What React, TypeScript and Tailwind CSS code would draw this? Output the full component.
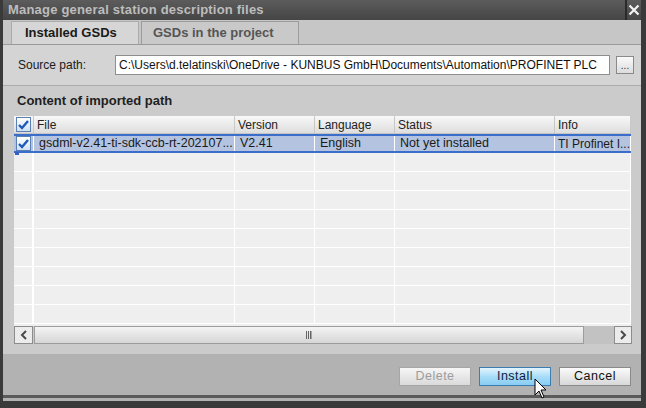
import React from "react";

const font = { fontFamily: '"Liberation Sans", Arial, sans-serif' };

const cols = [
  { label: "File", w: "w-[201px]" },
  { label: "Version", w: "w-[80px]" },
  { label: "Language", w: "w-[80px]" },
  { label: "Status", w: "w-[160px]" },
  { label: "Info", w: "flex-1" },
];

const rowData = ["gsdml-v2.41-ti-sdk-ccb-rt-202107...", "V2.41", "English", "Not yet installed", "TI Profinet I..."];

const Check = () => (
  <div className="w-[15px] h-[15px] border border-[#5b7fb0] bg-gradient-to-b from-[#ffffff] to-[#cfe0f4] flex items-center justify-center">
    <svg width="11" height="10" viewBox="0 0 11 10">
      <path d="M1 5 L4 8 L10 1" stroke="#1c5bb8" strokeWidth="2.4" fill="none" />
    </svg>
  </div>
);

const Btn = ({ label, kind }: { label: string; kind: "off" | "hot" | "on" }) => {
  const cls =
    kind === "hot"
      ? "border-[#3d7cb0] bg-gradient-to-b from-[#e4f5fe] via-[#a9dcf8] to-[#86cdf3] text-[#10203a]"
      : kind === "off"
      ? "border-[#a6a6a6] bg-gradient-to-b from-[#f6f6f6] to-[#dadada] text-[#9c9c9c]"
      : "border-[#8a8a8a] bg-gradient-to-b from-[#fbfbfb] to-[#d8d8d8] text-[#111]";
  return (
    <div
      className={`w-[72px] h-[19px] border flex items-center justify-center text-[12.5px] tracking-[0.5px] ${cls}`}
    >
      {label}
    </div>
  );
};

export default function App() {
  return (
    <div style={font} className="relative w-[646px] h-[408px] bg-[#3a3a3a] flex flex-col overflow-hidden">
      {/* title bar */}
      <div className="h-[20px] flex bg-gradient-to-b from-[#5c5c5c] to-[#454545] ml-[3px] mr-[5px]">
        <div className="flex-1 pl-[5px] text-[13px] font-bold text-[#bdbdbd] leading-[20px] tracking-[0.2px]">
          Manage general station description files
        </div>
        <div className="w-[2px] bg-[#2a2a2a]" />
        <div className="w-[14px] flex items-center justify-center">
          <svg width="12" height="12" viewBox="0 0 12 12">
            <path d="M1.5 1.5 L10.5 10.5 M10.5 1.5 L1.5 10.5" stroke="#f2f2f2" strokeWidth="2.2" />
          </svg>
        </div>
      </div>

      <div className="flex-1 flex flex-col ml-[3px] mr-[5px] bg-[#b2b2b2]">
        {/* tabs */}
        <div className="h-[25px] bg-[#c6c6c6] flex items-end pl-[8px] border-b border-[#9a9a9a]">
          <div className="w-[128px] h-[23px] bg-[#d6d6d6] border-t border-x border-[#ababab] border-b-0 flex items-center pl-[13px] text-[13px] font-bold text-[#1a1a1a]">
            Installed GSDs
          </div>
          <div className="ml-[2px] w-[158px] h-[23px] bg-[#c9c9c9] border border-[#9c9c9c] border-b-0 flex items-center pl-[11px] text-[13px] font-bold text-[#555]">
            GSDs in the project
          </div>
        </div>

        {/* source path */}
        <div className="h-[41px] bg-[#d4d4d4] flex items-center border-b border-[#ababab]">
          <div className="w-[112px] pl-[15px] text-[12px] text-[#1a1a1a]">Source path:</div>
          <div className="w-[495px] h-[20px] bg-white border border-[#8e8e8e] text-[12px] text-[#111] leading-[18px] pl-[3px] overflow-hidden whitespace-nowrap">
            C:\Users\d.telatinski\OneDrive - KUNBUS GmbH\Documents\Automation\PROFINET PLC
          </div>
          <div className="ml-[6px] w-[18px] h-[18px] border border-[#8a8a8a] bg-gradient-to-b from-[#fafafa] to-[#dcdcdc] flex items-end justify-center pb-[3px] text-[10px] leading-[8px] text-[#333]">
            ...
          </div>
        </div>

        {/* content */}
        <div className="h-[268px] bg-[#cbcbcb] flex flex-col pl-[11px] pr-[9px]">
          <div className="h-[30px] flex items-center pl-[3px] text-[13px] font-bold text-[#1e1e1e]">
            Content of imported path
          </div>
          <div className="w-[617px] h-[210px] bg-[#efefef] flex flex-col overflow-hidden">
            {/* header */}
            <div className="h-[18px] flex bg-gradient-to-b from-[#f8f8f8] to-[#dedede] border-b border-[#c4c4c4] text-[12px] text-[#222]">
              <div className="w-[20px] flex items-center justify-center border-r border-[#c8c8c8]">
                <Check />
              </div>
              {cols.map((c) => (
                <div key={c.label} className={`${c.w} flex items-center pl-[3px] border-r border-[#c8c8c8]`}>
                  {c.label}
                </div>
              ))}
            </div>
            {/* selected row */}
            <div className="relative h-[19px] flex bg-[#b4c4e0] border-y-2 border-[#3b6ecb] text-[12.5px] text-[#1a1a1a]">
              <div className="w-[20px] flex items-center justify-center border-r border-white">
                <Check />
              </div>
              {cols.map((c, i) => (
                <div
                  key={c.label}
                  className={`${c.w} flex items-center ${i === 4 ? "pl-[3px] text-[12px]" : "pl-[5px]"} border-r border-white whitespace-nowrap overflow-hidden`}
                >
                  {rowData[i]}
                </div>
              ))}
              <div className="absolute left-[1px] bottom-[-4px] w-[4px] h-[3px] bg-[#2f62c4]" />
            </div>
            {Array.from({ length: 9 }).map((_, r) => (
              <div key={r} className="h-[19px] flex border-b border-white">
                <div className="w-[20px] border-r-2 border-white" />
                {cols.map((c) => (
                  <div key={c.label} className={`${c.w} border-r border-white`} />
                ))}
              </div>
            ))}
          </div>
          {/* h scrollbar */}
          <div className="w-[618px] h-[18px] flex">
            <div className="w-[19px] h-[18px] border border-[#8c8c8c] bg-[#ececec] flex items-center justify-center">
              <svg width="8" height="10" viewBox="0 0 8 10">
                <path d="M6 1 L2 5 L6 9" stroke="#4a4a4a" strokeWidth="2" fill="none" />
              </svg>
            </div>
            <div className="ml-[1px] w-[550px] h-[18px] border border-[#9c9c9c] bg-gradient-to-b from-[#f4f4f4] to-[#d6d6d6] flex items-center justify-center">
              <svg width="6" height="8" viewBox="0 0 6 8">
                <path d="M0.5 0 V8 M2.5 0 V8 M4.5 0 V8 M6 0 V8" stroke="#555" strokeWidth="0.9" />
              </svg>
            </div>
            <div className="flex-1 bg-[#c2c2c2]" />
            <div className="w-[18px] h-[18px] border border-[#8c8c8c] bg-[#ececec] flex items-center justify-center">
              <svg width="8" height="10" viewBox="0 0 8 10">
                <path d="M2 1 L6 5 L2 9" stroke="#4a4a4a" strokeWidth="2" fill="none" />
              </svg>
            </div>
          </div>
        </div>

        {/* footer */}
        <div className="h-[44px] bg-[#b2b2b2] flex items-start pt-[13px] justify-end gap-[8px] pr-[10px] border-b-[3px] border-[#5a5a5a]">
          <Btn label="Delete" kind="off" />
          <Btn label="Install" kind="hot" />
          <Btn label="Cancel" kind="on" />
        </div>
      </div>
      <div className="h-[7px] bg-[#3a3a3a]" />

      {/* mouse pointer */}
      <svg className="absolute left-[534px] top-[378px]" width="14" height="22" viewBox="0 0 14 22">
        <path d="M1 1 L1 17 L5 13 L8 20 L10 19 L7 12 L12 12 Z" fill="#fff" stroke="#000" strokeWidth="1" />
      </svg>
    </div>
  );
}
